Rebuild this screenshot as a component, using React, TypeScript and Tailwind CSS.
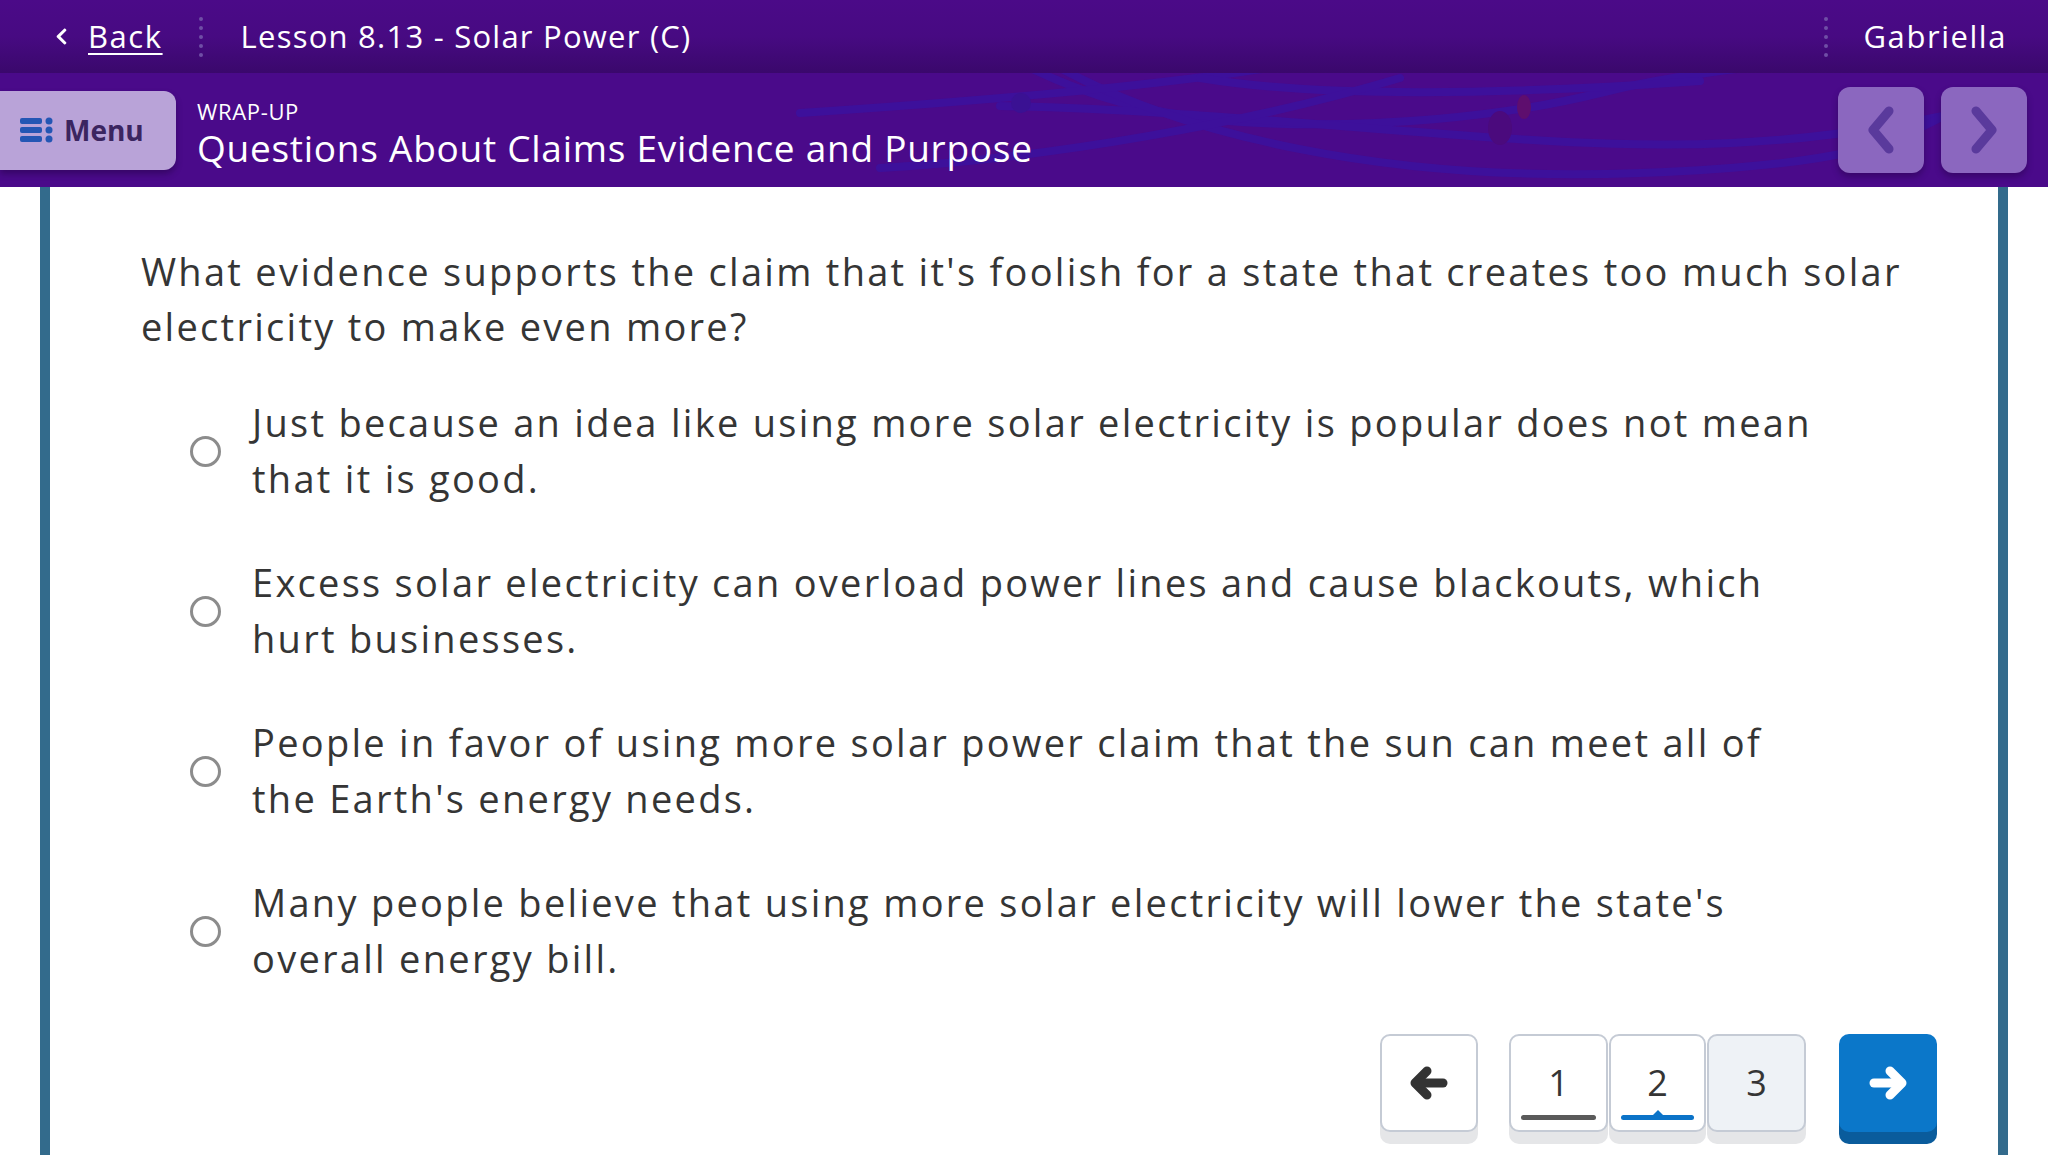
import React from "react";
import { FaChevronLeft } from "react-icons/fa";

const answers = [
    "Just because an idea like using more solar electricity is popular does not mean that it is good.",
    "Excess solar electricity can overload power lines and cause blackouts, which hurt businesses.",
    "People in favor of using more solar power claim that the sun can meet all of the Earth's energy needs.",
    "Many people believe that using more solar electricity will lower the state's overall energy bill.",
];

const font = { fontFamily: "'Open Sans', 'Noto Sans', sans-serif" };

const Dots = () => (
    <div className="flex flex-col gap-[5px] h-[46px] justify-center">
        {[0, 1, 2, 3, 4].map((i) => (
            <span key={i} className="block w-[4px] h-[4px] rounded-full bg-[#6f4ea6]" />
        ))}
    </div>
);

const MenuIcon = () => (
    <svg width="34" height="28" viewBox="0 0 34 28">
        <rect x="0" y="2" width="22" height="6" rx="2" fill="#2456b4" />
        <rect x="0" y="11" width="22" height="6" rx="2" fill="#2456b4" />
        <rect x="0" y="20" width="22" height="6" rx="2" fill="#2456b4" />
        <circle cx="29" cy="5" r="3.5" fill="#2456b4" />
        <circle cx="29" cy="14" r="3.5" fill="#2456b4" />
        <circle cx="29" cy="23" r="3.5" fill="#2456b4" />
    </svg>
);

// thick rounded chevron for the lesson nav buttons
const Chevron = ({ dir }: { dir: "left" | "right" }) => (
    <svg width="28" height="50" viewBox="0 0 28 50">
        <polyline
            points={dir === "left" ? "22,6 6,25 22,44" : "6,6 22,25 6,44"}
            fill="none"
            stroke="#5a3a9c"
            strokeWidth="9"
            strokeLinecap="round"
            strokeLinejoin="round"
        />
    </svg>
);

// rounded arrow used in the pager
const Arrow = ({ dir, color }: { dir: "left" | "right"; color: string }) => (
    <svg width="40" height="34" viewBox="0 0 40 34" className={dir === "right" ? "rotate-180" : ""}>
        <g fill="none" stroke={color} strokeWidth="9" strokeLinecap="round" strokeLinejoin="round">
            <polyline points="18,5 6,17 18,29" />
            <line x1="7" y1="17" x2="34" y2="17" />
        </g>
    </svg>
);

const HeaderArt = () => (
    <svg
        className="absolute inset-0 w-full h-full pointer-events-none"
        viewBox="0 0 2048 114"
        preserveAspectRatio="none"
    >
        <g fill="none" stroke="#3b12a0" strokeWidth="8" strokeLinecap="round" opacity="0.8">
            <path d="M1020 -10 C 1080 20, 1150 45, 1260 50 S 1500 45, 1600 20 S 1800 -10, 1900 -20" />
            <path d="M1000 33 C 1150 35, 1350 55, 1500 65 S 1800 80, 2000 30" />
            <path d="M1060 -5 C 1180 60, 1380 110, 1640 100 S 1900 60, 1990 20" />
            <path d="M800 40 C 950 30, 1150 15, 1300 -10" />
            <path d="M1200 5 C 1320 25, 1500 22, 1700 8" />
            <path d="M880 95 C 1050 85, 1250 50, 1400 5" />
        </g>
        <circle cx="1021" cy="30" r="10" fill="#3a1193" />
        <ellipse cx="1500" cy="55" rx="12" ry="17" fill="#4b0a7d" />
        <ellipse cx="1524" cy="34" rx="7" ry="12" fill="#5e0e6e" />
        <ellipse cx="1915" cy="30" rx="9" ry="13" fill="#5e1070" opacity="0.6" />
    </svg>
);

const Radio = () => (
    <span className="mt-[42px] block w-[31px] h-[31px] shrink-0 rounded-full border-[3px] border-[#8c8c8c] bg-white" />
);

const App = () => {
    return (
        <div className="min-h-screen bg-white text-[#353535]" style={font}>
            {/* Top bar */}
            <div className="h-[73px] flex items-center bg-gradient-to-b from-[#4b0a88] via-[#470a82] to-[#3a086c] text-white">
                <div className="flex items-center pl-[52px] gap-[17px] text-[31px] tracking-[0.05em]">
                    <FaChevronLeft className="text-white" size={19} />
                    <span className="underline underline-offset-[5px] decoration-2">Back</span>
                </div>
                <div className="ml-[36px] mr-[38px]">
                    <Dots />
                </div>
                <span className="text-[31px] tracking-[0.04em]">Lesson 8.13 - Solar Power (C)</span>
                <div className="ml-auto mr-[36px]">
                    <Dots />
                </div>
                <span className="text-[31px] tracking-[0.05em] pr-[41px]">Gabriella</span>
            </div>

            {/* Lesson header */}
            <div className="relative h-[114px] bg-[#4a0a8a] flex items-center overflow-hidden">
                <HeaderArt />
                <div className="relative flex items-center gap-[10px] w-[176px] h-[79px] rounded-r-[12px] bg-[#b9a3d8] pl-[20px] shadow-[0_4px_6px_rgba(30,0,60,0.45)]">
                    <MenuIcon />
                    <span className="text-[28px] font-bold text-[#3b2560]">Menu</span>
                </div>
                <div className="relative ml-[21px] pt-[8px] text-white">
                    <div className="text-[22px] leading-[28px] tracking-[0.03em]">WRAP-UP</div>
                    <div className="text-[37px] leading-[46px] font-medium tracking-[0.02em]">
                        Questions About Claims Evidence and Purpose
                    </div>
                </div>
                <div className="relative ml-auto mr-[21px] flex gap-[17px]">
                    <button className="w-[86px] h-[86px] rounded-[12px] bg-[#8b67bf] flex items-center justify-center shadow-[0_4px_6px_rgba(30,0,60,0.4)]">
                        <Chevron dir="left" />
                    </button>
                    <button className="w-[86px] h-[86px] rounded-[12px] bg-[#8b67bf] flex items-center justify-center shadow-[0_4px_6px_rgba(30,0,60,0.4)]">
                        <Chevron dir="right" />
                    </button>
                </div>
            </div>

            {/* Content card */}
            <div className="mx-[40px] border-x-[10px] border-[#336b8c] bg-white min-h-[968px] pt-[57px] pb-[20px]">
                <p className="pl-[91px] pr-[58px] text-[38px] leading-[55px] tracking-[0.06em]">
                    What evidence supports the claim that it's foolish for a state that creates too much solar electricity to make even more?
                </p>

                <div className="mt-[40px] pl-[140px] flex flex-col gap-[48px]">
                    {answers.map((a) => (
                        <div key={a} className="flex items-start gap-[31px]">
                            <Radio />
                            <span className="text-[38px] leading-[56px] tracking-[0.06em] max-w-[1578px]">{a}</span>
                        </div>
                    ))}
                </div>

                <div className="mt-[48px] flex justify-end pr-[61px]">
                    <button className="w-[98px] h-[98px] rounded-[10px] border-2 border-[#c5cbd5] bg-white flex items-center justify-center shadow-[0_12px_0_#e5e6e8]">
                        <Arrow dir="left" color="#333333" />
                    </button>
                    <div className="ml-[31px] flex gap-[1px]">
                        <button className="relative w-[99px] h-[98px] rounded-[10px] border-2 border-[#c5cbd5] bg-white text-[36px] shadow-[0_12px_0_#e5e6e8]">
                            1
                            <span className="absolute left-[10px] right-[10px] bottom-[10px] h-[5px] rounded-full bg-[#5a5a5a]" />
                        </button>
                        <button className="relative w-[97px] h-[98px] rounded-[10px] border-2 border-[#c5cbd5] bg-white text-[36px] shadow-[0_12px_0_#e5e6e8]">
                            2
                            <span className="absolute left-[10px] right-[10px] bottom-[10px] h-[5px] rounded-full bg-[#0b73c8]" />
                            <span className="absolute left-1/2 -translate-x-1/2 bottom-[14px] w-0 h-0 border-x-[6px] border-x-transparent border-b-[6px] border-b-[#0b73c8]" />
                        </button>
                        <button className="w-[99px] h-[98px] rounded-[10px] border-2 border-[#c5cbd5] bg-[#eef2f6] text-[36px] shadow-[0_12px_0_#e5e6e8]">
                            3
                        </button>
                    </div>
                    <button className="ml-[33px] w-[98px] h-[98px] rounded-[10px] bg-[#0b77c9] flex items-center justify-center shadow-[0_12px_0_#0a5c9c]">
                        <Arrow dir="right" color="#ffffff" />
                    </button>
                </div>
            </div>
        </div>
    );
};

export default App;
